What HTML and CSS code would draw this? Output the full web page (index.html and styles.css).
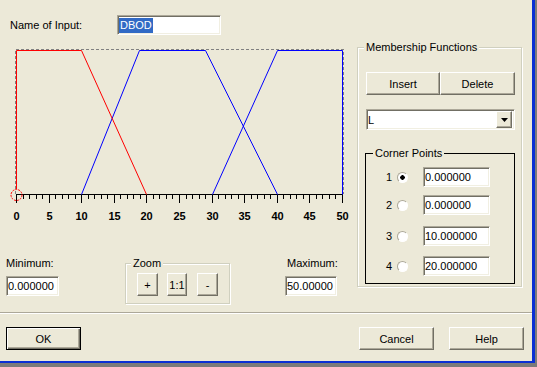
FILE: index.html
```html
<!DOCTYPE html>
<html lang="en">

<head>
    <meta charset="UTF-8">
    <title>Membership Function Editor</title>
    <link rel="stylesheet" href="styles.css">
</head>

<body>
    <div class="window">
        <div class="main">
            <div class="left">
                <!-- Input name -->
                <div class="name-row">
                    <span class="name-label">Name of Input:</span>
                    <div class="field name-field"><span class="sel">DBOD</span></div>
                </div>

                <!-- Membership function plot, drawn in page coordinates -->
                <svg class="plot" width="350" height="190" viewBox="0 35 350 190">
                    <path d="M15.5 194V49.5H343.5V194" fill="none" stroke="#808080" stroke-dasharray="3 2" shape-rendering="crispEdges"/>
                    <path d="M16 194.5H343" stroke="#000" shape-rendering="crispEdges"/>
                    <path d="M23.5 194v5M29.5 194v5M36.5 194v5M42.5 194v5M55.5 194v5M62.5 194v5M68.5 194v5M75.5 194v5M88.5 194v5M94.5 194v5M101.5 194v5M107.5 194v5M120.5 194v5M127.5 194v5M133.5 194v5M140.5 194v5M153.5 194v5M159.5 194v5M166.5 194v5M172.5 194v5M186.5 194v5M192.5 194v5M199.5 194v5M205.5 194v5M218.5 194v5M225.5 194v5M231.5 194v5M238.5 194v5M251.5 194v5M257.5 194v5M264.5 194v5M270.5 194v5M283.5 194v5M290.5 194v5M296.5 194v5M303.5 194v5M316.5 194v5M322.5 194v5M329.5 194v5M335.5 194v5" stroke="#000" shape-rendering="crispEdges"/>
                    <path d="M16.5 194v9M49.5 194v9M81.5 194v9M114.5 194v9M146.5 194v9M179.5 194v9M212.5 194v9M244.5 194v9M277.5 194v9M309.5 194v9M342.5 194v9" stroke="#000" shape-rendering="crispEdges"/>
                    <g class="ticks">
                        <text x="16.5" y="220">0</text>
                        <text x="49.5" y="220">5</text>
                        <text x="81.5" y="220">10</text>
                        <text x="114.5" y="220">15</text>
                        <text x="146.5" y="220">20</text>
                        <text x="179.5" y="220">25</text>
                        <text x="212.5" y="220">30</text>
                        <text x="244.5" y="220">35</text>
                        <text x="277.5" y="220">40</text>
                        <text x="309.5" y="220">45</text>
                        <text x="342.5" y="220">50</text>
                    </g>
                    <polyline points="81.5,194.5 139.5,50.5 205.5,50.5 277.5,194.5" fill="none" stroke="#0000ff"/>
                    <polyline points="212.5,194.5 277.5,50.5 342.5,50.5 342.5,194.5" fill="none" stroke="#0000ff"/>
                    <polyline points="16.5,189 16.5,50.5 81.5,50.5 146.5,194.5" fill="none" stroke="#ff0000"/>
                    <circle cx="16.5" cy="195" r="5.5" fill="none" stroke="#ff0000" stroke-dasharray="2 1"/>
                </svg>

                <!-- Range and zoom -->
                <div class="range-row">
                    <div class="range min">
                        <div class="range-label">Minimum:</div>
                        <input class="field" type="text" value="0.000000">
                    </div>
                    <fieldset class="group zoom">
                        <legend>Zoom</legend>
                        <div class="zoom-buttons">
                            <button class="btn zoom-btn">+</button>
                            <button class="btn zoom-btn one">1:1</button>
                            <button class="btn zoom-btn minus">-</button>
                        </div>
                    </fieldset>
                    <div class="range max">
                        <div class="range-label">Maximum:</div>
                        <input class="field" type="text" value="50.00000">
                    </div>
                </div>
            </div>

            <div class="right">
                <fieldset class="group mf">
                    <legend>Membership Functions</legend>
                    <div class="mf-buttons">
                        <button class="btn insert">Insert</button>
                        <button class="btn delete">Delete</button>
                    </div>
                    <div class="select">
                        <span>L</span>
                        <span class="drop">
                            <svg width="7" height="4" viewBox="0 0 7 4"><polygon points="0,0 7,0 3.5,4" fill="#000"/></svg>
                        </span>
                    </div>

                    <fieldset class="corner">
                        <legend>Corner Points</legend>
                        <div class="point">
                            <span class="point-num">1</span>
                            <input class="radio" type="radio" name="corner" checked>
                            <input class="field" type="text" value="0.000000">
                        </div>
                        <div class="point">
                            <span class="point-num">2</span>
                            <input class="radio" type="radio" name="corner">
                            <input class="field" type="text" value="0.000000">
                        </div>
                        <div class="point">
                            <span class="point-num">3</span>
                            <input class="radio" type="radio" name="corner">
                            <input class="field" type="text" value="10.000000">
                        </div>
                        <div class="point">
                            <span class="point-num">4</span>
                            <input class="radio" type="radio" name="corner">
                            <input class="field" type="text" value="20.000000">
                        </div>
                    </fieldset>
                </fieldset>
            </div>
        </div>

        <!-- Dialog buttons -->
        <div class="footer">
            <button class="btn default ok">OK</button>
            <button class="btn cancel">Cancel</button>
            <button class="btn help">Help</button>
        </div>
    </div>
</body>

</html>
```

FILE: styles.css
```css
body {
    margin: 0;
    background: #7b7b7b;
    font-family: "Liberation Sans", Arial, sans-serif;
    font-size: 11px;
    color: #000;
}

.window {
    width: 532px;
    height: 361px;
    background: #ece9d8;
    border-right: 3px solid #0a2fd4;
    border-bottom: 2px solid #0a2fd4;
    display: flex;
    flex-direction: column;
}

.main {
    display: flex;
    height: 312px;
}

.left {
    width: 350px;
}

.name-row {
    display: flex;
    align-items: center;
    height: 20px;
    margin-top: 15px;
    padding-left: 10px;
}

.name-label {
    width: 107px;
}

.field {
    box-sizing: border-box;
    height: 20px;
    margin: 0;
    padding: 0 0 0 1px;
    background: #fff;
    border: 1px solid;
    border-color: #aca899 #fff #fff #aca899;
    box-shadow: inset 1px 1px #716f64, inset -1px -1px #f1efe2;
    font: inherit;
    color: #000;
    outline: none;
}

.name-field {
    width: 104px;
    display: flex;
    align-items: center;
}

.sel {
    background: #316ac5;
    color: #fff;
    padding: 0 1px;
    line-height: 15px;
}

.plot {
    display: block;
}

.ticks text {
    font-family: "Liberation Sans", Arial, sans-serif;
    font-size: 11px;
    font-weight: bold;
    text-anchor: middle;
}

.range-row {
    display: flex;
    margin-top: 32px;
}

.range-label {
    line-height: 13px;
}

.range .field {
    margin-top: 6px;
    width: 100%;
}

.min {
    margin-left: 6px;
    width: 53px;
}

.max {
    margin-left: 55px;
    width: 52px;
}

.max .range-label {
    padding-left: 2px;
}

.group {
    box-sizing: border-box;
    margin: 0;
    min-width: 0;
    border: 1px solid #d0d0bf;
    box-shadow: inset 1px 1px #fff, 1px 1px #fff;
}

.group legend,
.corner legend {
    padding: 0 2px;
    line-height: 13px;
    background: #ece9d8;
}

.zoom {
    margin-left: 66px;
    width: 105px;
    padding: 3px 5px 7px;
}

.zoom-buttons {
    display: flex;
    margin-left: 6px;
}

.btn {
    box-sizing: border-box;
    height: 23px;
    margin: 0;
    padding: 0;
    background: #ece9d8;
    border: 1px solid;
    border-color: #fff #716f64 #716f64 #fff;
    box-shadow: inset -1px -1px #aca899;
    font: inherit;
    color: #000;
}

.btn.default {
    border-color: #000;
    box-shadow: inset 1px 1px #fff, inset -1px -1px #716f64, inset -2px -2px #aca899;
}

.zoom-btn {
    width: 21px;
}

.zoom-btn.one {
    width: 20px;
    margin-left: 9px;
}

.zoom-btn.minus {
    margin-left: 10px;
}

.right {
    padding: 41px 0 0 7px;
}

.mf {
    width: 165px;
    padding: 18px 6px 2px;
}

.mf-buttons {
    display: flex;
    margin-left: 2px;
}

.insert {
    width: 74px;
}

.delete {
    width: 75px;
}

.select {
    box-sizing: border-box;
    display: flex;
    align-items: center;
    width: 149px;
    height: 21px;
    margin: 14px 0 0 2px;
    padding: 0 2px 0 1px;
    background: #fff;
    border: 1px solid;
    border-color: #aca899 #fff #fff #aca899;
    box-shadow: inset 1px 1px #716f64, inset -1px -1px #f1efe2;
}

.drop {
    box-sizing: border-box;
    margin-left: auto;
    width: 16px;
    height: 17px;
    display: flex;
    align-items: center;
    justify-content: center;
    background: #ece9d8;
    border: 1px solid;
    border-color: #fff #716f64 #716f64 #fff;
    box-shadow: inset -1px -1px #aca899;
}

.drop svg {
    display: block;
}

.corner {
    box-sizing: border-box;
    width: 150px;
    margin: 17px 0 0 1px;
    min-width: 0;
    padding: 7px 7px 7px;
    border: 1px solid #000;
}

.point {
    display: flex;
    align-items: center;
    height: 20px;
    padding-left: 13px;
}

.point:nth-of-type(1) {
    margin-bottom: 8px;
}

.point:nth-of-type(2) {
    margin-bottom: 11px;
}

.point:nth-of-type(3) {
    margin-bottom: 10px;
}

.point-num {
    width: 6px;
}

.radio {
    appearance: none;
    box-sizing: border-box;
    width: 11px;
    height: 11px;
    margin: 0 0 0 5px;
    border-radius: 50%;
    border: 1px solid;
    border-color: #aca899 #fff #fff #aca899;
    background: #fff;
}

.radio:checked {
    background: radial-gradient(circle, #000 0 2px, #fff 2.5px);
}

.point .field {
    margin-left: 15px;
    width: 67px;
}

.footer {
    flex: 1;
    display: flex;
    border-top: 1px solid #aca899;
    box-shadow: inset 0 1px #fff;
    padding-top: 14px;
}

.footer .btn {
    width: 75px;
}

.ok {
    margin-left: 6px;
}

.cancel {
    margin-left: 278px;
}

.help {
    margin-left: 15px;
}
```
